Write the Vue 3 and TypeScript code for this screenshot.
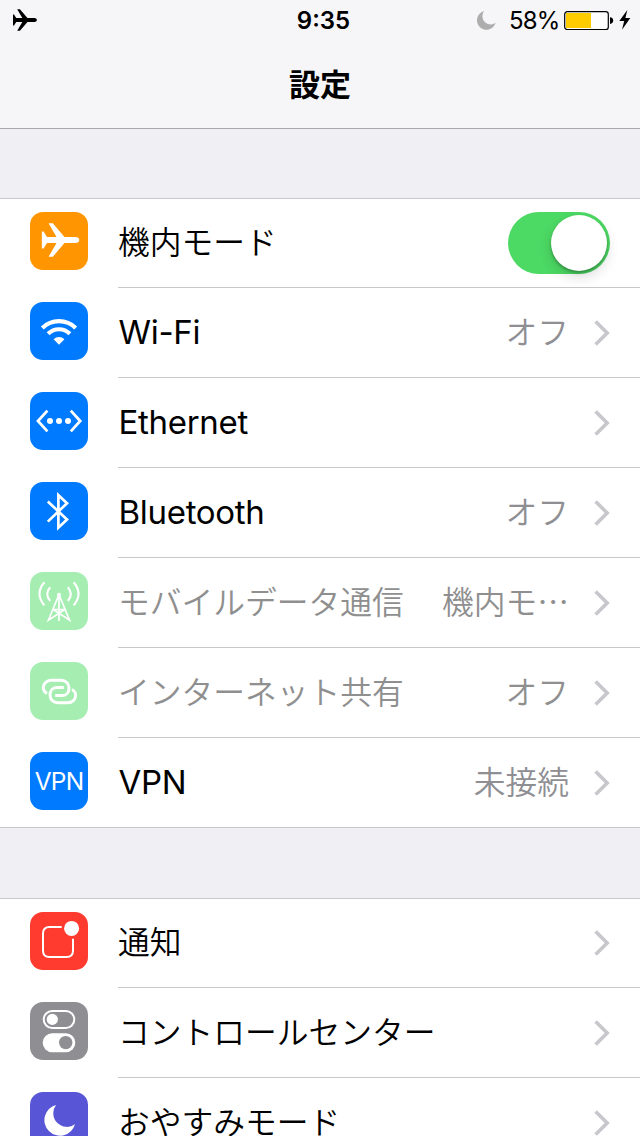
<script setup lang="ts">
type IconName =
  | 'airplane' | 'wifi' | 'ethernet' | 'bluetooth' | 'cellular'
  | 'hotspot' | 'vpn' | 'notifications' | 'control' | 'dnd'

interface Row {
  icon: IconName
  color: string
  label: string
  latin?: boolean
  value?: string
  toggle?: boolean
  disabled?: boolean
}

const groups: Row[][] = [
  [
    { icon: 'airplane', color: 'orange', label: '機内モード', toggle: true },
    { icon: 'wifi', color: 'blue', label: 'Wi-Fi', latin: true, value: 'オフ' },
    { icon: 'ethernet', color: 'blue', label: 'Ethernet', latin: true },
    { icon: 'bluetooth', color: 'blue', label: 'Bluetooth', latin: true, value: 'オフ' },
    { icon: 'cellular', color: 'green', label: 'モバイルデータ通信', value: '機内モ…', disabled: true },
    { icon: 'hotspot', color: 'green', label: 'インターネット共有', value: 'オフ', disabled: true },
    { icon: 'vpn', color: 'blue', label: 'VPN', latin: true, value: '未接続' },
  ],
  [
    { icon: 'notifications', color: 'red', label: '通知' },
    { icon: 'control', color: 'gray', label: 'コントロールセンター' },
    { icon: 'dnd', color: 'purple', label: 'おやすみモード' },
  ],
]

const planePath =
  'M11.8 19.6H13.6L17 25H26.5L18.6 11.2H22.8L34.5 25H46Q49.3 25.6 49.3 28Q49.3 30.4 46 31H34.5L22.8 44.8H18.6L26.5 31H17L13.6 36.4H11.8Z'
const moonPath = 'M26 13A15.6 15.6 0 1 0 45 32.3A13.7 13.7 0 0 1 26 13Z'
</script>

<template>
  <div class="screen" lang="ja">
    <header class="top">
      <div class="status">
        <div class="side left">
          <svg class="plane" viewBox="12 11 37.4 34"><path :d="planePath" /></svg>
        </div>
        <span class="time">9:35</span>
        <div class="side right">
          <svg class="moon" viewBox="14.6 12.8 30.8 31.2"><path :d="moonPath" /></svg>
          <span class="percent">58%</span>
          <svg class="battery" width="50" height="20" viewBox="0 0 50 20">
            <rect x="0.7" y="0.7" width="43.6" height="17.8" rx="2.6" fill="#fefefe" stroke="#000" stroke-width="1.2" />
            <rect x="2" y="2" width="25" height="15" fill="#fc0" />
            <path d="M46 6.2Q49.2 6.6 49.2 9.6T46 13Z" />
          </svg>
          <svg class="bolt" width="12" height="20" viewBox="0 0 12 20">
            <path d="M8.3 0L0.3 11H5.2L3 19.7L11.3 7.9H6.4Z" />
          </svg>
        </div>
      </div>
      <h1>設定</h1>
    </header>

    <section v-for="(group, g) in groups" :key="g" class="group">
      <div v-for="row in group" :key="row.label" class="row" :class="{ disabled: row.disabled }">
        <svg class="icon" :class="row.color" viewBox="0 0 58 58">
          <path v-if="row.icon === 'airplane'" :d="planePath" fill="#fff" />
          <g v-else-if="row.icon === 'wifi'" fill="none" stroke="#fff" stroke-width="4.1">
            <path d="M12.3 26A23.6 23.6 0 0 1 45.7 26" />
            <path d="M18.1 31.8A15.4 15.4 0 0 1 39.9 31.8" />
            <path d="M29 42.7L23.6 37.3A7.7 7.7 0 0 1 34.4 37.3Z" fill="#fff" stroke="none" />
          </g>
          <g v-else-if="row.icon === 'ethernet'" fill="none" stroke="#fff" stroke-width="2.8">
            <path d="M17.4 18.6L8 29L17.4 39.4M40.8 18.6L50.2 29L40.8 39.4" />
            <g fill="#fff" stroke="none">
              <circle cx="20" cy="29" r="3" />
              <circle cx="29" cy="29" r="3" />
              <circle cx="38" cy="29" r="3" />
            </g>
          </g>
          <path
            v-else-if="row.icon === 'bluetooth'"
            d="M17.8 19.4L37 37.6L28.4 45.7V13.2L37 21.2L17.8 39.6"
            fill="none" stroke="#fff" stroke-width="2.7"
          />
          <g v-else-if="row.icon === 'cellular'" fill="none" stroke="#fff" stroke-width="1.7">
            <circle cx="29" cy="22.8" r="2.1" fill="#fff" stroke="none" />
            <path d="M29 24V49M28.4 24L18.5 48L34.8 37.6M29.6 24L39.5 48L23.2 37.6M23.2 37.6H34.8" />
            <g stroke-width="2.1">
              <path d="M20.2 15.2Q14.2 22 20.2 29M37.8 15.2Q43.8 22 37.8 29" />
              <path d="M14.4 10.3Q4.6 21.8 14.4 33.4M43.6 10.3Q53.4 21.8 43.6 33.4" />
            </g>
          </g>
          <g v-else-if="row.icon === 'hotspot'" fill="none" stroke="#fff" stroke-width="2.9">
            <path d="M17 31.6C14.5 30 13.3 27.9 13.3 25.7C13.3 21.5 17 18.3 21 18.3H31.3C35.8 18.3 39 21.6 39 26S36.3 33.5 32.5 33.5H25.2" />
            <path d="M42 27.4C44.5 29 45.7 31.1 45.7 33.3C45.7 37.5 42 40.7 38 40.7H27.7C23.2 40.7 20 37.4 20 33S22.7 25.5 26.5 25.5H33.8" />
          </g>
          <text v-else-if="row.icon === 'vpn'" class="vpn" x="29" y="38" text-anchor="middle">VPN</text>
          <g v-else-if="row.icon === 'notifications'">
            <path d="M31.7 15H19.5Q13 15 13 21.5V38.5Q13 45 19.5 45H36.5Q43 45 43 38.5V26.8" fill="none" stroke="#fff" stroke-width="2" />
            <circle cx="41.6" cy="16.4" r="7.5" fill="#fff" />
          </g>
          <g v-else-if="row.icon === 'control'">
            <rect x="13.7" y="9" width="30.6" height="17" rx="8.5" fill="none" stroke="#fff" stroke-width="2" />
            <circle cx="22.3" cy="17.4" r="5.6" fill="#fff" />
            <rect x="12.7" y="31.2" width="32.6" height="19" rx="9.5" fill="#fff" />
            <circle cx="35.7" cy="40.6" r="6.7" fill="#8e8e93" />
          </g>
          <path v-else :d="moonPath" fill="#fff" />
        </svg>
        <div class="content">
          <span class="label" :class="{ latin: row.latin }">{{ row.label }}</span>
          <span v-if="row.value" class="value">{{ row.value }}</span>
          <span v-if="row.toggle" class="switch"><span class="knob"></span></span>
          <svg v-else class="chevron" width="18" height="28" viewBox="0 0 18 28">
            <path d="M2.6 2.4L14.2 14L2.6 25.6" fill="none" stroke="#c7c7cc" stroke-width="3.6" />
          </svg>
        </div>
      </div>
    </section>
  </div>
</template>

<style>
body {
  margin: 0;
  background: #efeff4;
}
</style>

<style scoped>
.screen {
  width: 640px;
  height: 1136px;
  overflow: hidden;
  background: #efeff4;
  color: #000;
  font-family: Inter, "Noto Sans CJK JP", sans-serif;
}
.top {
  box-sizing: border-box;
  height: 129px;
  border-bottom: 1px solid #a9a9ad;
  background: #f6f6f8;
}
.status {
  display: flex;
  align-items: center;
  height: 40px;
  font-size: 24px;
}
.side {
  display: flex;
  flex: 1;
  align-items: center;
}
.left {
  padding-left: 13px;
}
.right {
  justify-content: flex-end;
  padding-right: 9px;
}
.plane {
  width: 24px;
  height: 22px;
}
.time {
  margin: 1px 0 0 3px;
  font-weight: 600;
}
.moon {
  width: 19px;
  height: 19px;
  margin-right: 13px;
  fill: #adadad;
}
.percent {
  width: 49px;
  margin: 1px 6px 0 0;
  letter-spacing: -0.8px;
  white-space: nowrap;
}
.battery {
  margin-top: 2px;
  margin-right: 5px;
}
h1 {
  margin: 0;
  padding-top: 20px;
  font-family: "Noto Sans CJK JP", sans-serif;
  font-size: 31px;
  font-weight: 700;
  line-height: 46px;
  text-align: center;
}
.group {
  margin-top: 69px;
  background: #fff;
  box-shadow: inset 0 1px 0 #c8c7cc;
}
.group + .group {
  margin-top: 70px;
}
.row {
  display: flex;
  height: 90px;
  padding-left: 30px;
}
.icon {
  flex: none;
  width: 58px;
  height: 58px;
  margin: 14px 30px 0 0;
  border-radius: 13px;
}
.orange { background: #ff9500; }
.blue { background: #007aff; }
.green { background: #a6edb2; }
.red { background: #ff3b30; }
.gray { background: #8e8e93; }
.purple { background: #5856d6; }
.vpn {
  fill: #fff;
  font-size: 24.5px;
  font-weight: 400;
  letter-spacing: -0.8px;
}
.content {
  display: flex;
  flex: 1;
  box-sizing: border-box;
  align-items: center;
  height: 90px;
  padding-top: 1px;
  padding-right: 29px;
  border-bottom: 1px solid #c8c7cc;
}
.row:last-child .content {
  margin-left: -118px;
  padding-left: 118px;
}
.label,
.value {
  padding-bottom: 7px;
  font-family: "Noto Sans CJK JP", sans-serif;
  font-size: 31.75px;
  font-weight: 350;
  line-height: 42px;
  white-space: nowrap;
}
.label {
  flex: 1;
}
.label.latin {
  padding-bottom: 2px;
  font-family: Inter, sans-serif;
  font-size: 33px;
  font-weight: 380;
  letter-spacing: -0.3px;
  text-indent: 0.5px;
}
.value {
  margin-right: 24px;
  color: #8e8e93;
}
.disabled .label,
.disabled .value {
  color: #8f8f8f;
}
.switch {
  display: flex;
  box-sizing: border-box;
  justify-content: flex-end;
  width: 102px;
  height: 62px;
  margin-right: 1px;
  padding: 3px;
  border-radius: 31px;
  background: #4cd964;
}
.knob {
  width: 56px;
  height: 56px;
  border-radius: 50%;
  background: #fff;
  box-shadow: 0 6px 14px rgba(0, 0, 0, 0.14), 0 2px 3px rgba(0, 0, 0, 0.28);
}
</style>
